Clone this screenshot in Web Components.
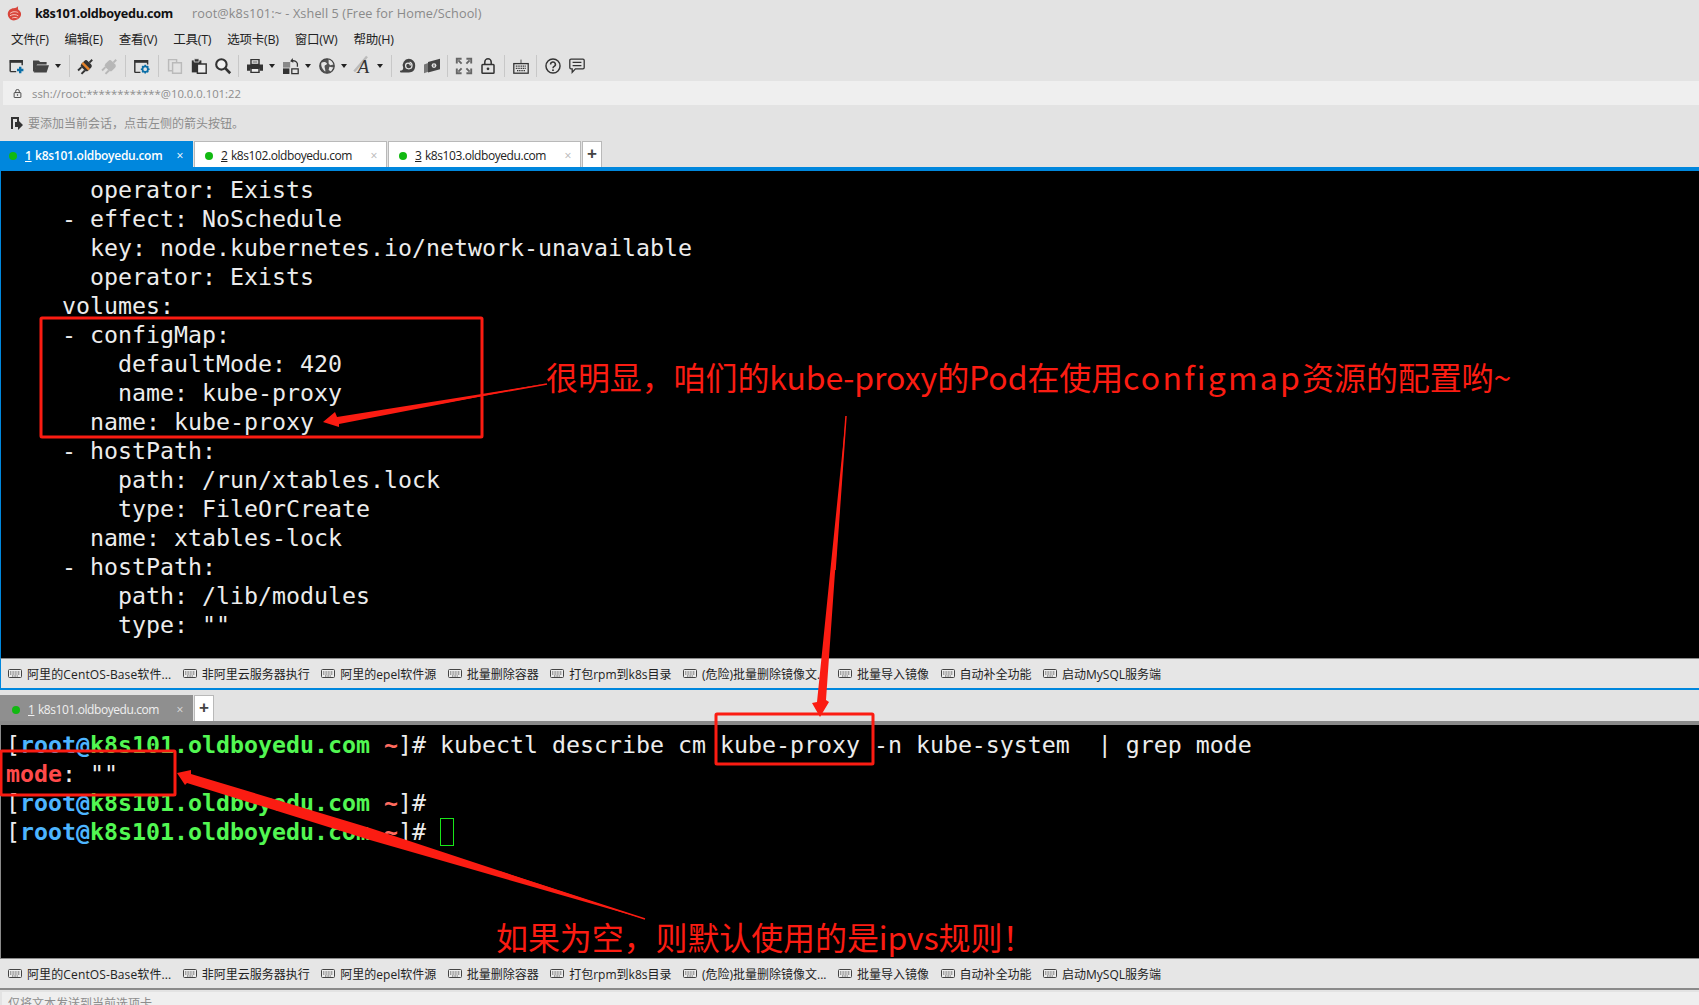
<!DOCTYPE html>
<html>
<head>
<meta charset="utf-8">
<style>
  html, body { margin: 0; height: 100%; overflow: hidden; background: #e3e3e3; }
  body { font-family: "Liberation Sans", "Noto Sans CJK SC", sans-serif; }
</style>
</head>
<body>
<xshell-app></xshell-app>

<script>
const UI_FONT = `"Open Sans", "Noto Sans CJK SC", sans-serif`;

// Icons are all drawn on a 20x20 box
const ICONS = {
  newSession: `<path d="M1.5 17V3.500h15V9M1.500 17H9" fill="none" stroke="#333" stroke-width="1.800"/><path d="M1 3h16v3H1z" fill="#333"/><path d="M14 11v8M10 15h8" stroke="#0b6fa8" stroke-width="3"/>`,
  open: `<path d="M0 3h7l2 2h8v3H5l-3 9H0z" fill="#444"/><path d="M4 9h16l-3 9H1z" fill="#444"/>`,
  connect: `<g transform="rotate(-45 10 10)"><rect x="5" y="4" width="11" height="12" rx="3" fill="#333"/><rect x="8" y="4" width="3" height="12" fill="#e8842a"/><path d="M16 10h5M-1 7h6M-1 13h6" stroke="#333" stroke-width="2.400"/></g>`,
  disconnect: `<g transform="rotate(-45 10 10)" opacity=".3"><rect x="5" y="4" width="11" height="12" rx="3" fill="#555"/><path d="M16 10h5M-1 7h6M-1 13h6" stroke="#555" stroke-width="2.400"/></g>`,
  props: `<path d="M1 18V3.500h16V8M1 18h7" fill="none" stroke="#333" stroke-width="1.800"/><path d="M1 3h16v3H1z" fill="#333"/><circle cx="14" cy="14" r="3.400" fill="none" stroke="#0b6fa8" stroke-width="2.200"/><path d="M14 8.500v2M14 17.500v2M8.500 14h2M17.500 14h2M10.200 10.200l1.400 1.400M16.400 16.400l1.400 1.400M10.200 17.800l1.400-1.400M16.400 11.600l1.400-1.400" stroke="#0b6fa8" stroke-width="2"/>`,
  copy: `<g opacity=".25" fill="none" stroke="#444" stroke-width="1.800"><path d="M2 2h10v14H2z"/><path d="M7 6h11v13H7z" fill="#e3e3e3"/></g>`,
  paste: `<path d="M1 3h12v15H1z" fill="#333"/><path d="M4 1h6v4H4z" fill="#333" stroke="#e3e3e3"/><path d="M8 7.500h11V19H8z" fill="#eee" stroke="#333" stroke-width="1.800"/>`,
  find: `<circle cx="8" cy="8" r="6.500" fill="#f2f2f2" stroke="#333" stroke-width="2.600"/><path d="M13 13l6 6" stroke="#333" stroke-width="3.400"/>`,
  print: `<path d="M5 2h10v6H5z" fill="#eee" stroke="#333" stroke-width="1.800"/><path d="M0 8h20v8h-4v-3H4v3H0z" fill="#333"/><path d="M5 13h10v5H5z" fill="#eee" stroke="#333" stroke-width="1.800"/><path d="M7 5h6" stroke="#333"/>`,
  transfer: `<path d="M0 5h9v7H0z" fill="#888"/><path d="M0 13h8v7H0z" fill="#333"/><path d="M11 13.500h8v6h-8z" fill="none" stroke="#333" stroke-width="1.600"/><path d="M11 4a5 5 0 0 1 7 3v4" fill="none" stroke="#333" stroke-width="1.600"/><path d="M12 0l-3 4 4 2z" fill="#333"/>`,
  globe: `<circle cx="10" cy="10" r="9" fill="#555" stroke="#444" stroke-width="1.600"/><path d="M3 6c3-2 6-1 7 1-1 3-3 1-3 4 0 2 1 3 1 6-3-2-6-6-5-11zM12 2c3 1 5 3 6 6l-4 1-2-2zM13 11l5 1-3 5-3-2z" fill="#e6e6e6"/>`,
  font: `<path d="M-1 17L15 -2" stroke="#bbb" stroke-width="3"/><text x="3" y="19" font-family="Liberation Serif" font-style="italic" font-size="24" fill="#333">A</text>`,
  shell: `<path d="M11 1a8 8 0 0 1 8 8c0 6-3 9-8 9H1c-1 0-1-1-1-2 3 0 4-1 4-4a8 8 0 0 1 7-11z" fill="#444"/><path d="M12 5a4.500 4.500 0 0 1 3 4.500 4 4 0 0 1-8 0 3 3 0 0 1 6 0" fill="none" stroke="#e3e3e3" stroke-width="1.600"/>`,
  book: `<path d="M0 8l6-2v11l-6 2z" fill="#777"/><path d="M5 5l15-4v13L5 18z" fill="#444"/><circle cx="12.500" cy="9.500" r="3" fill="#e3e3e3"/><path d="M12.500 8v3" stroke="#444" stroke-width="1.400"/>`,
  full: `<path d="M1 7V1h6M13 1h6v6M19 13v6h-6M7 19H1v-6" fill="none" stroke="#666" stroke-width="2.400"/><path d="M3 3l4 4M17 3l-4 4M17 17l-4-4M3 17l4-4" stroke="#666" stroke-width="2.400"/>`,
  lock: `<rect x="2.500" y="8" width="15" height="11" rx="1" fill="none" stroke="#333" stroke-width="1.900"/><path d="M6 8V5a4 4 0 0 1 8 0v3" fill="none" stroke="#333" stroke-width="1.900"/><circle cx="10" cy="13.500" r="1.700" fill="#333"/>`,
  keyboard: `<rect x="1" y="7" width="18" height="12" fill="none" stroke="#333" stroke-width="1.600"/><path d="M3.500 10.200h13M3.500 13h13M5 15.800h10" stroke="#333" stroke-width="1.600" stroke-dasharray="1.400 .8"/><path d="M10 7V2" stroke="#333"/>`,
  help: `<circle cx="10" cy="10" r="8.800" fill="none" stroke="#333" stroke-width="1.800"/><path d="M7 8a3 3 0 1 1 4.500 2.500c-1 .6-1.500 1-1.500 2.300" fill="none" stroke="#333" stroke-width="1.900"/><circle cx="10" cy="15.200" r="1.200" fill="#333"/>`,
  chat: `<path d="M2.500 1.500h15A1.500 1.500 0 0 1 19 3v9a1.500 1.500 0 0 1-1.500 1.500H8L4 18v-4.500H2.500A1.500 1.500 0 0 1 1 12V3a1.500 1.500 0 0 1 1.500-1.500z" fill="none" stroke="#333" stroke-width="1.600"/><path d="M4.500 5.500h11M4.500 9.500h11" stroke="#333" stroke-width="1.400"/>`,
};

const svgIcon = (name, size = 16) =>
  `<svg width="${size}" height="${size}" viewBox="0 0 20 20" aria-hidden="true">${ICONS[name]}</svg>`;

class TitleBar extends HTMLElement {
  constructor() {
    super();
    this.attachShadow({ mode: "open" }).innerHTML = `<style>
        :host { display: flex; align-items: center; height: 26px; padding-left: 7px; font: 12.7px ${UI_FONT}; }
        svg { margin-right: 13px; }
        b { color: #111; letter-spacing: -.3px; margin-right: 19px; }
        span { color: #8a8a8a; letter-spacing: .1px; }
      </style>
      <svg width="15" height="15" viewBox="0 0 20 20">
        <path d="M1 11c0-5 4-8 8-8 2 0 4-1 6-3-1 2 0 4 0 5 3 2 5 5 3 9-2 3-6 6-11 5-3-1-6-4-6-8z" fill="#d8453b"/>
        <path d="M4 10c3-3 8-3 11-1M4 13c3-2 8-2 11 0M7 16c2-1 5-1 7 0" fill="none" stroke="#f6c9c2" stroke-width="1.300"/>
      </svg>
      <b>k8s101.oldboyedu.com</b>
      <span>root@k8s101:~ - Xshell 5 (Free for Home/School)</span>`;
  }
}

class MenuBar extends HTMLElement {
  constructor() {
    super();
    const items = ["文件(F)", "编辑(E)", "查看(V)", "工具(T)", "选项卡(B)", "窗口(W)", "帮助(H)"];
    this.attachShadow({ mode: "open" }).innerHTML = `<style>
        :host { display: flex; align-items: center; gap: 16px; height: 25px; padding-left: 11px; font: 12.5px ${UI_FONT}; color: #222; letter-spacing: -.25px; }
      </style>
      ${items.map(i => `<span>${i}</span>`).join("")}`;
  }
}

class ToolBar extends HTMLElement {
  constructor() {
    super();
    const groups = [
      [["newSession"], ["open", 1]],
      [["connect"], ["disconnect"]],
      [["props"]],
      [["copy"], ["paste"], ["find"]],
      [["print", 1], ["transfer", 1], ["globe", 1], ["font", 1]],
      [["shell"], ["book"]],
      [["full"], ["lock"]],
      [["keyboard"]],
      [["help"], ["chat"]],
    ];
    this.attachShadow({ mode: "open" }).innerHTML = `<style>
        :host { display: flex; align-items: center; height: 30px; padding-left: 9px; }
        .group { display: flex; align-items: center; gap: 8px; padding-right: 7.5px; margin-right: 8px; border-right: 1px solid #c8c8c8; height: 22px; }
        .group:last-child { border: 0; }
        .item { display: flex; align-items: center; gap: 6px; }
        i { display: block; width: 0; height: 0; border: 3px solid transparent; border-top: 4px solid #222; border-bottom: 0; }
        svg { display: block; overflow: visible; }
      </style>
      ${groups.map(g => `<div class="group">${g.map(([n, drop]) =>
        `<div class="item">${svgIcon(n)}${drop ? "<i></i>" : ""}</div>`).join("")}</div>`).join("")}`;
  }
}

class AddressBar extends HTMLElement {
  constructor() {
    super();
    this.attachShadow({ mode: "open" }).innerHTML = `<style>
        :host { display: flex; align-items: center; gap: 10px; height: 24px; margin-left: 3px; padding-left: 10px; background: #efefef; font: 11.3px ${UI_FONT}; color: #8d8d8d; }
      </style>
      ${svgIcon("lock", 9)}<span>ssh://root:************@10.0.0.101:22</span>`;
  }
}

class InfoBar extends HTMLElement {
  constructor() {
    super();
    this.attachShadow({ mode: "open" }).innerHTML = `<style>
        :host { display: flex; align-items: center; gap: 4px; height: 36px; padding-left: 10px; font: 12px ${UI_FONT}; color: #8d8d8d; }
      </style>
      <svg width="14" height="14" viewBox="0 0 14 14"><path d="M1 1h8v5H7V3H3v10H1z" fill="#333"/><path d="M5 6h3V4l5 5-5 5v-3H5z" fill="#333"/></svg>
      <span>要添加当前会话，点击左侧的箭头按钮。</span>`;
  }
}

class TabItem extends HTMLElement {
  static get observedAttributes() { return ["num", "label"]; }
  constructor() {
    super();
    this.attachShadow({ mode: "open" }).innerHTML = `<style>
        :host { display: flex; align-items: center; box-sizing: border-box; width: 193px; height: 100%; margin-right: 1px; padding: 2px 0 0 10px; background: #fff; border: 1px solid #b9b9b9; border-bottom: 0; font: 12px ${UI_FONT}; color: #222; letter-spacing: -.42px; position: relative; }
        :host([active]) { padding-left: 8px; background: #0087dd; border-color: #0087dd; color: #fff; font-weight: 600; letter-spacing: -.28px; }
        :host([dim]) { padding-left: 11px; background: #8f8f8f; border-color: #8f8f8f; color: #f0f0f0; }
        .dot { width: 8px; height: 8px; border-radius: 50%; background: #11b911; margin-right: 8px; }
        u { margin-right: 3.5px; }
        .x { position: absolute; right: 9px; top: 50%; transform: translateY(-50%); color: #b5b5b5; font-size: 12px; font-weight: 400; }
        :host([active]) .x { color: #fff; }
        :host([dim]) .x { color: #ddd; }
      </style><span class="dot"></span><u id="n"></u><span id="l"></span><span class="x">×</span>`;
  }
  attributeChangedCallback(name, _old, val) {
    this.shadowRoot.querySelector(name === "num" ? "#n" : "#l").textContent = val;
  }
}

class TabStrip extends HTMLElement {
  constructor() {
    super();
    this.attachShadow({ mode: "open" }).innerHTML = `<style>
        :host { display: flex; align-items: flex-end; height: 26px; }
        ::slotted(tab-item) { height: 26px; }
        .add { box-sizing: border-box; width: 20px; height: 26px; background: #fff; border: 1px solid #b9b9b9; border-bottom: 0; text-align: center; font: bold 17px/24px "Liberation Sans", sans-serif; color: #444; }
      </style><slot></slot><div class="add">+</div>`;
  }
}

class TermView extends HTMLElement {
  constructor() {
    super();
    // no whitespace around the slot: the host is white-space: pre and would show it
    this.attachShadow({ mode: "open" }).innerHTML = `<style>
        :host { display: block; box-sizing: border-box; background: #000; color: #ececec; padding: 4px 0 0 6px; overflow: hidden; font: 23.25px/29px "DejaVu Sans Mono", monospace; white-space: pre; }
      </style><slot></slot>`;
  }
}

class QuickBar extends HTMLElement {
  constructor() {
    super();
    const items = ["阿里的CentOS-Base软件...", "非阿里云服务器执行", "阿里的epel软件源", "批量删除容器", "打包rpm到k8s目录", "(危险)批量删除镜像文...", "批量导入镜像", "自动补全功能", "启动MySQL服务端"];
    this.attachShadow({ mode: "open" }).innerHTML = `<style>
        :host { display: flex; align-items: center; gap: 11.5px; box-sizing: border-box; height: 30px; padding-left: 8px; background: #e6e6e6; font: 12px ${UI_FONT}; color: #222; }
        .q { display: flex; align-items: center; gap: 5px; white-space: nowrap; }
        .q:first-of-type { letter-spacing: .12px; }
      </style>
      ${items.map(t => `<span class="q"><svg width="14" height="9" viewBox="0 0 14 9"><rect x=".5" y=".5" width="13" height="8" rx="1" fill="#eee" stroke="#444"/><path d="M2 3h10M2 5h10M4 7h6" stroke="#555" stroke-dasharray="1 .6"/></svg>${t}</span>`).join("")}`;
  }
}

// Red marks somebody painted over the screenshot
class MarkUp extends HTMLElement {
  constructor() {
    super();
    this.attachShadow({ mode: "open" }).innerHTML = `<style>
        :host { position: absolute; inset: 0; pointer-events: none; display: block; }
        svg { position: absolute; left: 0; top: 0; }
        .note { position: absolute; color: #fb1c12; font: 32px/40px "Noto Sans CJK SC", sans-serif; letter-spacing: -.1px; white-space: nowrap; }
        .wide { letter-spacing: 2.2px; }
      </style>
      <svg width="1699" height="1005" fill="none" stroke="#fb1c12" stroke-width="3">
        <rect x="41" y="318" width="441" height="119" rx="1"/>
        <rect x="716" y="714" width="157" height="50" rx="1"/>
        <rect x="1" y="751" width="174" height="44" rx="1"/>
        <path d="M323 422L335 412L337 417L547 383.500L339 424L339 427Z" fill="#fb1c12" stroke="none"/>
        <path d="M547 384L440 403M846 416L835 570M645 919L500 872" stroke-width="1.500"/>
        <path d="M846 416L826 700L829 702L820 717L812 703L817 702Z" fill="#fb1c12" stroke="none"/>
        <path d="M177 773L191 770L191 774L370 828L645 919L370 840L187 783L185 785Z" fill="#fb1c12" stroke="none"/>
      </svg>
      <div class="note" style="left:546px;top:356px">很明显，咱们的kube-proxy的Pod在使用<span class="wide">configmap</span>资源的配置哟~</div>
      <div class="note" style="left:496px;top:916px">如果为空，则默认使用的是ipvs规则！</div>`;
  }
}

class XshellApp extends HTMLElement {
  constructor() {
    super();
    const prompt = `[<b class="u">root@</b><b class="h">k8s101.oldboyedu.com</b> <b class="t">~</b>]#`;
    this.attachShadow({ mode: "open" }).innerHTML = `<style>
        :host { display: block; position: relative; width: 1699px; height: 1005px; overflow: hidden; background: #e3e3e3; }
        .blue { height: 4px; background: #0087dd; }
        .top-term { height: 487px; border-left: 1px solid #0087dd; padding-left: 5px; }
        .pane1 { height: 32px; border-top: 1px solid #8a8a8a; border-bottom: 2px solid #0087dd; border-left: 1px solid #0087dd; padding-left: 7px; }
        .sub { margin-top: 5px; }
        .gap { height: 4px; background: #8a8a8a; }
        .low { height: 233px; border-left: 1px solid #8a8a8a; padding: 5px 0 0 5px; }
        .bq { height: 32px; border-top: 1px solid #8a8a8a; border-bottom: 2px solid #8a8a8a; }
        .cursor { display: inline-block; box-sizing: border-box; width: 14px; height: 28px; border: 1px solid #19e619; vertical-align: -6px; }
        .status { height: 13px; margin: 2px 0 0 2px; background: #efefef; font: 12px/24px ${UI_FONT}; color: #8d8d8d; padding-left: 6px; overflow: hidden; }
        .mode { color: #ff4a4a; font-weight: bold; }
        .u { color: #4db5ff; }
        .h { color: #52f752; }
        .t { color: #ff6b5f; }
      </style>
      <title-bar></title-bar>
      <menu-bar></menu-bar>
      <tool-bar></tool-bar>
      <address-bar></address-bar>
      <info-bar></info-bar>
      <tab-strip>
        <tab-item active num="1" label="k8s101.oldboyedu.com"></tab-item>
        <tab-item num="2" label="k8s102.oldboyedu.com"></tab-item>
        <tab-item num="3" label="k8s103.oldboyedu.com"></tab-item>
      </tab-strip>
      <div class="blue"></div>
      <term-view class="top-term">      operator: Exists
    - effect: NoSchedule
      key: node.kubernetes.io/network-unavailable
      operator: Exists
    volumes:
    - configMap:
        defaultMode: 420
        name: kube-proxy
      name: kube-proxy
    - hostPath:
        path: /run/xtables.lock
        type: FileOrCreate
      name: xtables-lock
    - hostPath:
        path: /lib/modules
        type: ""</term-view>
      <quick-bar class="pane1"></quick-bar>
      <tab-strip class="sub">
        <tab-item dim num="1" label="k8s101.oldboyedu.com"></tab-item>
      </tab-strip>
      <div class="gap"></div>
      <term-view class="low">${prompt} kubectl describe cm kube-proxy -n kube-system  | grep mode
<span class="mode">mode</span>: ""
${prompt}
${prompt} <span class="cursor"></span></term-view>
      <quick-bar class="bq"></quick-bar>
      <div class="status">仅将文本发送到当前选项卡</div>
      <mark-up></mark-up>`;
  }
}

customElements.define("title-bar", TitleBar);
customElements.define("menu-bar", MenuBar);
customElements.define("tool-bar", ToolBar);
customElements.define("address-bar", AddressBar);
customElements.define("info-bar", InfoBar);
customElements.define("tab-item", TabItem);
customElements.define("tab-strip", TabStrip);
customElements.define("term-view", TermView);
customElements.define("quick-bar", QuickBar);
customElements.define("mark-up", MarkUp);
customElements.define("xshell-app", XshellApp);
</script>
</body>
</html>
